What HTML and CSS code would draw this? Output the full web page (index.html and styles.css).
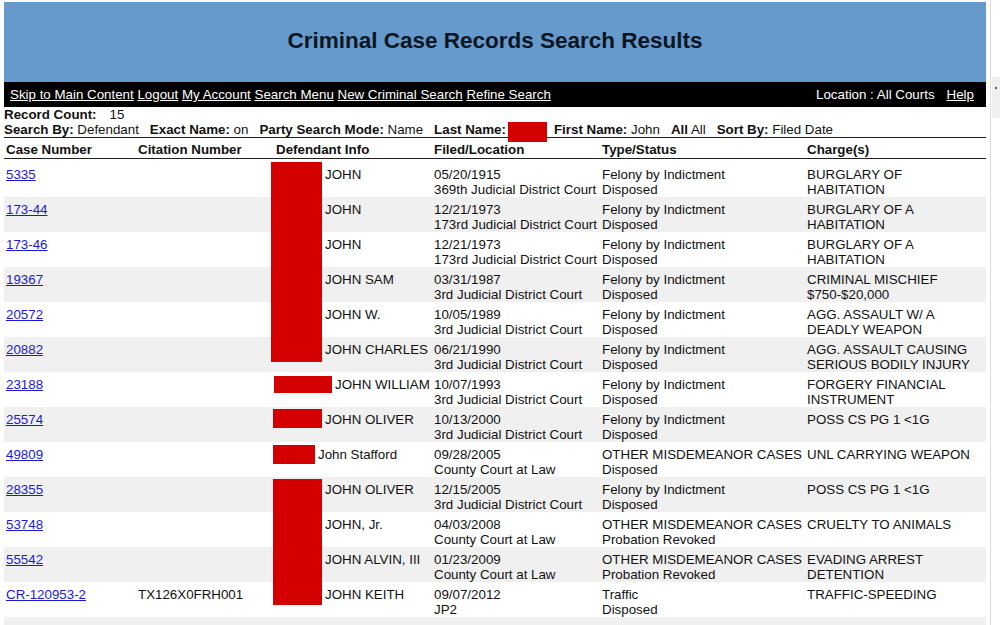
FILE: index.html
```html
<!DOCTYPE html>
<html lang="en">
<head>
<meta charset="utf-8">
<title>Criminal Case Records Search Results</title>
<link rel="stylesheet" href="styles.css">
</head>
<body>
<div class="page">
  <header class="banner">
    <h1>Criminal Case Records Search Results</h1>
  </header>
  <nav class="navbar">
    <div class="navlinks">
      <a href="#main">Skip to Main Content</a> <a href="#">Logout</a> <a href="#">My Account</a> <a href="#">Search Menu</a> <a href="#">New Criminal Search</a> <a href="#">Refine Search</a>
    </div>
    <div class="navright">
      <span>Location : All Courts</span>
      <a href="#">Help</a>
    </div>
  </nav>
  <div class="summary" id="main">
    <div class="count"><b>Record Count:</b><span class="countval">15</span></div>
    <div class="criteria">
      <span><b>Search By:</b> Defendant</span>
      <span><b>Exact Name:</b> on</span>
      <span><b>Party Search Mode:</b> Name</span>
      <span class="lastname"><b>Last Name:</b><span class="redact-inline"></span></span>
      <span><b>First Name:</b> John</span>
      <span><b>All</b> All</span>
      <span><b>Sort By:</b> Filed Date</span>
    </div>
  </div>
  <table class="results">
    <thead>
      <tr>
        <th class="c1">Case Number</th>
        <th class="c2">Citation Number</th>
        <th class="c3">Defendant Info</th>
        <th class="c4">Filed/Location</th>
        <th class="c5">Type/Status</th>
        <th class="c6">Charge(s)</th>
      </tr>
    </thead>
    <tbody>
      <tr class="first">
        <td><a href="#">5335</a></td><td></td>
        <td class="def"><div class="defbox"><span class="rx rx-a rx-a1"></span><span class="name">JOHN</span></div></td>
        <td>05/20/1915<br>369th Judicial District Court</td>
        <td>Felony by Indictment<br>Disposed</td>
        <td>BURGLARY OF<br>HABITATION</td>
      </tr>
      <tr class="alt">
        <td><a href="#">173-44</a></td><td></td>
        <td class="def"><div class="defbox"><span class="rx rx-a rx-full"></span><span class="name">JOHN</span></div></td>
        <td>12/21/1973<br>173rd Judicial District Court</td>
        <td>Felony by Indictment<br>Disposed</td>
        <td>BURGLARY OF A<br>HABITATION</td>
      </tr>
      <tr>
        <td><a href="#">173-46</a></td><td></td>
        <td class="def"><div class="defbox"><span class="rx rx-a rx-full"></span><span class="name">JOHN</span></div></td>
        <td>12/21/1973<br>173rd Judicial District Court</td>
        <td>Felony by Indictment<br>Disposed</td>
        <td>BURGLARY OF A<br>HABITATION</td>
      </tr>
      <tr class="alt">
        <td><a href="#">19367</a></td><td></td>
        <td class="def"><div class="defbox"><span class="rx rx-a rx-full"></span><span class="name">JOHN SAM</span></div></td>
        <td>03/31/1987<br>3rd Judicial District Court</td>
        <td>Felony by Indictment<br>Disposed</td>
        <td>CRIMINAL MISCHIEF<br>$750-$20,000</td>
      </tr>
      <tr>
        <td><a href="#">20572</a></td><td></td>
        <td class="def"><div class="defbox"><span class="rx rx-a rx-full"></span><span class="name">JOHN W.</span></div></td>
        <td>10/05/1989<br>3rd Judicial District Court</td>
        <td>Felony by Indictment<br>Disposed</td>
        <td>AGG. ASSAULT W/ A<br>DEADLY WEAPON</td>
      </tr>
      <tr class="alt">
        <td><a href="#">20882</a></td><td></td>
        <td class="def"><div class="defbox"><span class="rx rx-a rx-a6"></span><span class="name">JOHN CHARLES</span></div></td>
        <td>06/21/1990<br>3rd Judicial District Court</td>
        <td>Felony by Indictment<br>Disposed</td>
        <td>AGG. ASSAULT CAUSING<br>SERIOUS BODILY INJURY</td>
      </tr>
      <tr>
        <td><a href="#">23188</a></td><td></td>
        <td class="def"><div class="defbox"><span class="rx rx-7"></span><span class="name">JOHN WILLIAM</span></div></td>
        <td>10/07/1993<br>3rd Judicial District Court</td>
        <td>Felony by Indictment<br>Disposed</td>
        <td>FORGERY FINANCIAL<br>INSTRUMENT</td>
      </tr>
      <tr class="alt">
        <td><a href="#">25574</a></td><td></td>
        <td class="def"><div class="defbox"><span class="rx rx-8"></span><span class="name">JOHN OLIVER</span></div></td>
        <td>10/13/2000<br>3rd Judicial District Court</td>
        <td>Felony by Indictment<br>Disposed</td>
        <td>POSS CS PG 1 &lt;1G</td>
      </tr>
      <tr>
        <td><a href="#">49809</a></td><td></td>
        <td class="def"><div class="defbox"><span class="rx rx-9"></span><span class="name">John Stafford</span></div></td>
        <td>09/28/2005<br>County Court at Law</td>
        <td>OTHER MISDEMEANOR CASES<br>Disposed</td>
        <td>UNL CARRYING WEAPON</td>
      </tr>
      <tr class="alt">
        <td><a href="#">28355</a></td><td></td>
        <td class="def"><div class="defbox"><span class="rx rx-b rx-b1"></span><span class="name">JOHN OLIVER</span></div></td>
        <td>12/15/2005<br>3rd Judicial District Court</td>
        <td>Felony by Indictment<br>Disposed</td>
        <td>POSS CS PG 1 &lt;1G</td>
      </tr>
      <tr>
        <td><a href="#">53748</a></td><td></td>
        <td class="def"><div class="defbox"><span class="rx rx-b rx-full"></span><span class="name">JOHN, Jr.</span></div></td>
        <td>04/03/2008<br>County Court at Law</td>
        <td>OTHER MISDEMEANOR CASES<br>Probation Revoked</td>
        <td>CRUELTY TO ANIMALS</td>
      </tr>
      <tr class="alt">
        <td><a href="#">55542</a></td><td></td>
        <td class="def"><div class="defbox"><span class="rx rx-b rx-full"></span><span class="name">JOHN ALVIN, III</span></div></td>
        <td>01/23/2009<br>County Court at Law</td>
        <td>OTHER MISDEMEANOR CASES<br>Probation Revoked</td>
        <td>EVADING ARREST<br>DETENTION</td>
      </tr>
      <tr>
        <td><a href="#">CR-120953-2</a></td><td>TX126X0FRH001</td>
        <td class="def"><div class="defbox"><span class="rx rx-b rx-b4"></span><span class="name">JOHN KEITH</span></div></td>
        <td>09/07/2012<br>JP2</td>
        <td>Traffic<br>Disposed</td>
        <td>TRAFFIC-SPEEDING</td>
      </tr>
      <tr class="alt">
        <td><a href="#">24097</a></td><td></td>
        <td class="def"><div class="defbox"><span class="name">JOHN</span></div></td>
        <td>03/18/2013<br>County Court at Law</td>
        <td>Felony by Indictment<br>Disposed</td>
        <td>THEFT</td>
      </tr>
    </tbody>
  </table>
</div>
<div class="scrollstub" aria-hidden="true"><span class="stubbox"><span class="stubdot"></span></span></div>
</body>
</html>
```
FILE: styles.css
```css
html, body {
  margin: 0;
  padding: 0;
  background: #ffffff;
}
body {
  font-family: "Liberation Sans", Arial, sans-serif;
  font-size: 13.33px;
  color: #111111;
  overflow: hidden;
}
.page {
  width: 982px;
  margin: 2px 0 0 4px;
}
.banner {
  height: 80px;
  background: #6699cc;
  box-sizing: border-box;
  padding-top: 26px;
}
.banner h1 {
  margin: 0;
  text-align: center;
  font-size: 22.5px;
  line-height: 26px;
  font-weight: bold;
  color: #0c1622;
}
.navbar {
  height: 25px;
  background: #000000;
  color: #ffffff;
  display: flex;
  justify-content: space-between;
  align-items: center;
  padding: 0 12px 0 6px;
  font-size: 13.33px;
  line-height: 25px;
}
.navbar a {
  color: #ffffff;
  text-decoration: underline;
}
.navright {
  display: flex;
  gap: 12px;
}
.summary {
  line-height: 15px;
}
.count {
  height: 15px;
}
.countval {
  margin-left: 13px;
}
.criteria {
  display: flex;
  gap: 11px;
  height: 15px;
  border-bottom: 1px solid #222222;
  white-space: nowrap;
}
.lastname {
  margin-right: -4px;
}
.redact-inline {
  display: inline-block;
  width: 39px;
  height: 20px;
  margin-left: 2px;
  background: #d40000;
  vertical-align: -8px;
}
.results {
  width: 982px;
  border-collapse: collapse;
  border-spacing: 0;
  table-layout: fixed;
  line-height: 15px;
  white-space: nowrap;
}
.results th {
  text-align: left;
  font-weight: bold;
  padding: 4px 2px 1px;
  height: 20px;
  box-sizing: border-box;
  border-bottom: 1px solid #222222;
}
.c1 { width: 132px; }
.c2 { width: 134px; }
.c3 { width: 162px; }
.c3 { padding-left: 6px !important; }
.c4 { width: 168px; }
.c5 { width: 205px; }
.c6 { width: 181px; }
.results td {
  vertical-align: top;
  padding: 5px 2px 0;
  height: 35px;
  box-sizing: border-box;
}
.results tr.first td {
  height: 38px;
  padding-top: 8px;
}
.results tr.alt td {
  background: #f0f0f0;
}
.results a {
  color: #1a1ad0;
  text-decoration: underline;
}
.results td.def,
.results tr.first td.def {
  padding: 0;
}
.defbox {
  display: flex;
  align-items: flex-start;
}
.name {
  padding-top: 5px;
  margin-left: 3px;
}
.first .name {
  padding-top: 8px;
}
.rx {
  display: block;
  flex: none;
  background: #d40000;
}
.rx-a {
  width: 51px;
  margin-left: 1px;
}
.rx-b {
  width: 49px;
  margin-left: 3px;
}
.rx-full { height: 35px; }
.rx-a1 { height: 35px; margin-top: 3px; }
.rx-a6 { height: 25px; }
.rx-7 { width: 58px; height: 17px; margin-left: 4px; margin-top: 4px; }
.rx-8 { width: 49px; height: 19px; margin-left: 3px; margin-top: 2px; }
.rx-9 { width: 42px; height: 19px; margin-left: 3px; margin-top: 3px; }
.rx-b1 { height: 33px; margin-top: 2px; }
.rx-b4 { height: 23px; }
.scrollstub {
  position: fixed;
  top: 0;
  right: 0;
  width: 9px;
  height: 100%;
  border-left: 1px solid #dcdcdc;
  background: #ffffff;
}
.stubbox {
  position: absolute;
  top: 77px;
  left: 1px;
  width: 8px;
  height: 41px;
  background: #efefef;
}
.stubdot {
  position: absolute;
  top: 10px;
  left: 3px;
  width: 2px;
  height: 2px;
  background: #555555;
}
```
